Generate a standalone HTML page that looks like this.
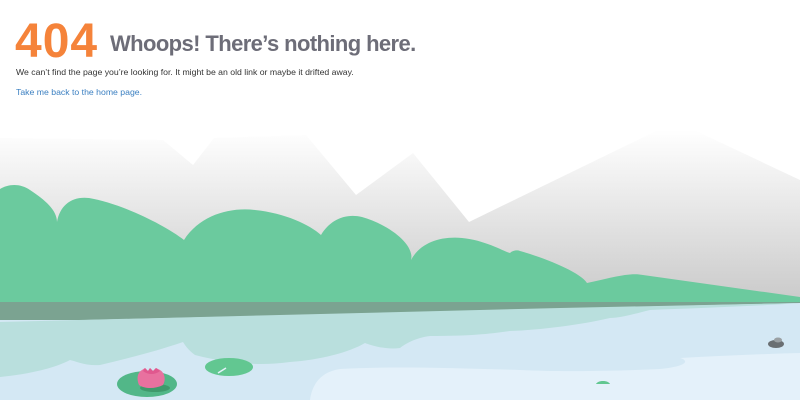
<!DOCTYPE html>
<html><head><meta charset="utf-8"><style>
html,body{margin:0;padding:0;width:800px;height:400px;overflow:hidden;background:#fff;font-family:"Liberation Sans",sans-serif}
.t{position:absolute;white-space:nowrap}
#n{left:15px;top:14px;font-size:48px;font-weight:bold;color:#f5833a;letter-spacing:1px}
#h{left:110px;top:31px;font-size:22px;font-weight:bold;color:#6d6d78;letter-spacing:-0.6px}
#p{left:16px;top:67px;font-size:8.7px;color:#333}
#a{left:16px;top:87px;font-size:8.7px;color:#3a7fc1}
svg{position:absolute;left:0;top:0}
</style></head><body>
<svg width="800" height="400" viewBox="0 0 800 400">
<defs>
<linearGradient id="g" x1="0" y1="0" x2="0" y2="1">
<stop offset="0" stop-color="#fff"/><stop offset="0.15" stop-color="#f7f7f7"/><stop offset="1" stop-color="#c9c9c9"/>
</linearGradient>
</defs>
<polygon fill="url(#g)" points="0,138 163,140 193,165 214,138 306,135 356,195 413,153 469,222 658,130 694,130 800,180 800,305 0,305"/>
<path fill="#6bca9e" d="M0,189 C8,184 20,183 30,190 C45,200 57,210 57,222 C60,205 72,196 89,198 C120,203 165,225 184,240 C200,215 230,207 255,210 C285,213 310,225 321,235 C330,220 345,213 362,217 C390,225 415,245 411,260 C420,243 440,236 462,238 C485,240 505,252 510,253 C513,250 518,250 520,251 C545,258 580,272 587,283 C610,278 630,272 643,275 L800,297 L800,305 L0,305 Z"/>
<rect x="0" y="302" width="800" height="20" fill="#7ba391"/>
<rect x="0" y="320" width="800" height="80" fill="#d4e8f4"/>
<path fill="#d4e8f4" d="M0,322 L800,303 L800,322 Z"/>
<path fill="#b9dfdd" d="M0,322 L560,308 L800,303 C760,306 700,308 650,310 C630,315 620,318 610,318 C580,325 540,330 510,331 C490,334 470,336 430,336 C415,338 405,344 400,348 C385,350 370,345 365,343 C350,352 320,360 290,362 C260,366 230,364 195,355 C188,350 185,345 183,342 C160,350 130,358 100,365 C85,366 75,361 70,360 C55,368 30,374 0,377 Z"/>
<path fill="#e4f1fa" d="M310,400 C312,385 320,372 340,369 C390,366 450,368 520,370 C560,372 620,371 660,369 C690,366 688,360 680,358 C720,356 760,354 800,353 L800,400 Z"/>
<ellipse cx="147" cy="384" rx="30" ry="13" fill="#52b788"/>
<ellipse cx="155" cy="388" rx="15" ry="4" fill="#3f9a6c"/>
<path fill="#e8719f" d="M139,385 C136,378 138,372 142,370 L145,368 L148,371 L150,368 L153,371 L156,368 L160,370 C165,373 166,380 163,385 C155,389 145,389 139,385 Z"/>
<path fill="#e0588e" d="M143,371 L145,368 L148,371 L150,368 L153,371 L156,368 L160,371 C155,375 148,375 143,371 Z"/>
<ellipse cx="229" cy="367" rx="24" ry="9" fill="#62c791"/>
<path d="M218,373 L226,368" stroke="#e4f1fa" stroke-width="1.5"/>
<path fill="#62c791" d="M596,384 C598,380 608,380 610,384 Z"/>
<ellipse cx="776" cy="344" rx="8" ry="4" fill="#6a6f72"/>
<ellipse cx="778" cy="340" rx="4" ry="2.5" fill="#9aa0a3"/>
</svg>
<div class="t" id="n">404</div>
<div class="t" id="h">Whoops! There’s nothing here.</div>
<div class="t" id="p">We can’t find the page you’re looking for. It might be an old link or maybe it drifted away.</div>
<div class="t" id="a">Take me back to the home page.</div>
</body></html>
